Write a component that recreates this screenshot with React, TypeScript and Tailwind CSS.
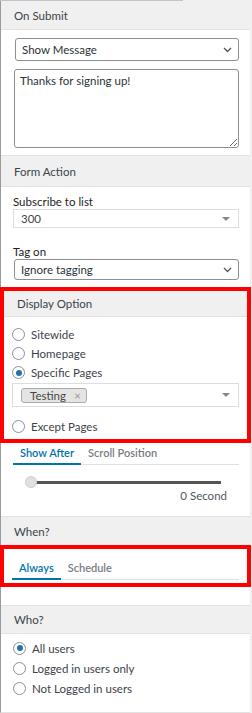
import React from "react";

const font = { fontFamily: 'Lato, "Noto Sans", sans-serif' };

const Chevron = () => (
  <svg width="9" height="6" viewBox="0 0 9 6" className="shrink-0">
    <path d="M1 1l3.5 3.5L8 1" fill="none" stroke="#50575e" strokeWidth="1.3" />
  </svg>
);

const Caret = () => (
  <svg width="8" height="4" viewBox="0 0 8 4" className="shrink-0">
    <path d="M0 0h8L4 4z" fill="#888" />
  </svg>
);

const Radio = ({ label, checked }: { label: string; checked?: boolean }) => (
  <div className="flex h-[19px] items-center gap-[6px]">
    <span className="flex h-[13px] w-[13px] items-center justify-center rounded-full border border-[#8c8f94] bg-white">
      {checked && <span className="h-[6px] w-[6px] rounded-full bg-[#2271b1]" />}
    </span>
    <span className="text-[11.5px] leading-[15px] text-[#3c434a]">{label}</span>
  </div>
);

const Header = ({ title, className = "" }: { title: string; className?: string }) => (
  <div
    className={`flex items-center border-b border-t border-[#e2e2e2] bg-[#f0f0f0] px-[13px] text-[11.5px] leading-[15px] text-[#3c434a] ${className}`}
  >
    {title}
  </div>
);

const Tabs = ({ items }: { items: string[] }) => (
  <div className="flex border-b border-[#e0e0e0]">
    {items.map((t, i) => (
      <div
        key={t}
        className={`-mb-px px-[7px] pb-[2px] text-[11px] font-semibold leading-[16px] ${
          i === 0
            ? "border-b-2 border-[#0073aa] text-[#0073aa]"
            : "border-b-2 border-transparent text-[#787c82]"
        }`}
      >
        {t}
      </div>
    ))}
  </div>
);

export default function App() {
  return (
    <div className="h-[713px] w-[252px] overflow-hidden bg-[#f0f0f0]" style={font}>
      <div className="h-[1px] w-[183px] bg-[#c3c4c7]" />
      <div className="mr-[2px] border-l border-[#9a9a9a] bg-white">
        <Header title="On Submit" className="h-[29px] border-t-0" />
        <div className="flex flex-col gap-[8px] pb-[7px] pl-[13px] pr-[11px] pt-[8px]">
          <div className="ml-[1px] flex h-[23px] items-center justify-between rounded-[3px] border border-[#8c8f94] pl-[6px] pr-[6px] text-[11.5px] leading-[15px] text-[#2c3338]">
            <span>Show Message</span>
            <Chevron />
          </div>
          <textarea
            readOnly
            defaultValue="Thanks for signing up!"
            className="h-[79px] w-full rounded-[3px] border border-[#8c8f94] px-[5px] py-[3px] text-[11.5px] leading-[16px] text-[#2c3338] outline-none"
            style={font}
          />
        </div>
        <Header title="Form Action" className="h-[32px]" />
        <div className="flex flex-col pb-[7px] pl-[12px] pr-[11px] pt-[7px]">
          <div className="text-[11.5px] leading-[15px] text-[#1e1e1e]">Subscribe to list</div>
          <div className="flex h-[19px] items-center justify-between border border-[#ddd] pl-[7px] pr-[8px] text-[11.5px] leading-[15px] text-[#444]">
            <span>300</span>
            <Caret />
          </div>
          <div className="mt-[16px] text-[11.5px] leading-[15px] text-[#1e1e1e]">Tag on</div>
          <div className="ml-[1px] flex h-[21px] items-center justify-between rounded-[3px] border border-[#8c8f94] pl-[6px] pr-[6px] text-[11.5px] leading-[15px] text-[#2c3338]">
            <span>Ignore tagging</span>
            <Chevron />
          </div>
        </div>
      </div>

      <div className="mr-[1px] border-4 border-[#ff0000] bg-white">
        <Header title="Display Option" className="h-[26px] border-t-0 px-[9px]" />
        <div className="flex flex-col pb-[3px] pl-[8px] pr-[8px] pt-[8px]">
          <Radio label="Sitewide" />
          <Radio label="Homepage" />
          <Radio label="Specific Pages" checked />
          <div className="mt-[1px] flex h-[24px] items-center justify-between border border-[#ddd] pl-[8px] pr-[8px]">
            <span className="flex h-[15px] items-center gap-[8px] rounded-[3px] border border-[#aaa] bg-[#e4e4e4] pl-[8px] pr-[5px] text-[11.5px] leading-[13px] text-[#444]">
              Testing
              <span className="text-[12px] text-[#999]">×</span>
            </span>
            <Caret />
          </div>
          <div className="mt-[10px]">
            <Radio label="Except Pages" />
          </div>
        </div>
      </div>

      <div className="mr-[2px] border-l border-[#9a9a9a] bg-white">
        <div className="pl-[12px] pr-[11px] pt-[2px]">
          <Tabs items={["Show After", "Scroll Position"]} />
          <div className="relative mx-[18px] mt-[16px] h-[3px] bg-[#555]">
            <span className="absolute -left-[6px] -top-[5px] h-[12px] w-[12px] rounded-full border border-[#ccc] bg-[#e0e0e0]" />
          </div>
          <div className="mt-[4px] pr-[12px] text-right text-[11.5px] leading-[15px] text-[#50575e]">0 Second</div>
        </div>
        <div className="h-[13px]" />
        <Header title="When?" className="h-[29px] border-b-0" />
      </div>

      <div className="mr-[1px] border-4 border-[#ff0000] bg-white">
        <div className="pb-[3px] pl-[8px] pr-[8px] pt-[11px]">
          <Tabs items={["Always", "Schedule"]} />
        </div>
      </div>

      <div className="mr-[2px] border-b border-l border-[#9a9a9a] bg-white" style={{ borderBottomColor: "#e2e2e2" }}>
        <div className="h-[18px]" />
        <Header title="Who?" className="h-[29px]" />
        <div className="flex flex-col pb-[14px] pl-[12px] pt-[4px]">
          <div className="flex flex-col [&>div]:h-[20px]">
            <Radio label="All users" checked />
            <Radio label="Logged in users only" />
            <Radio label="Not Logged in users" />
          </div>
        </div>
      </div>
    </div>
  );
}
